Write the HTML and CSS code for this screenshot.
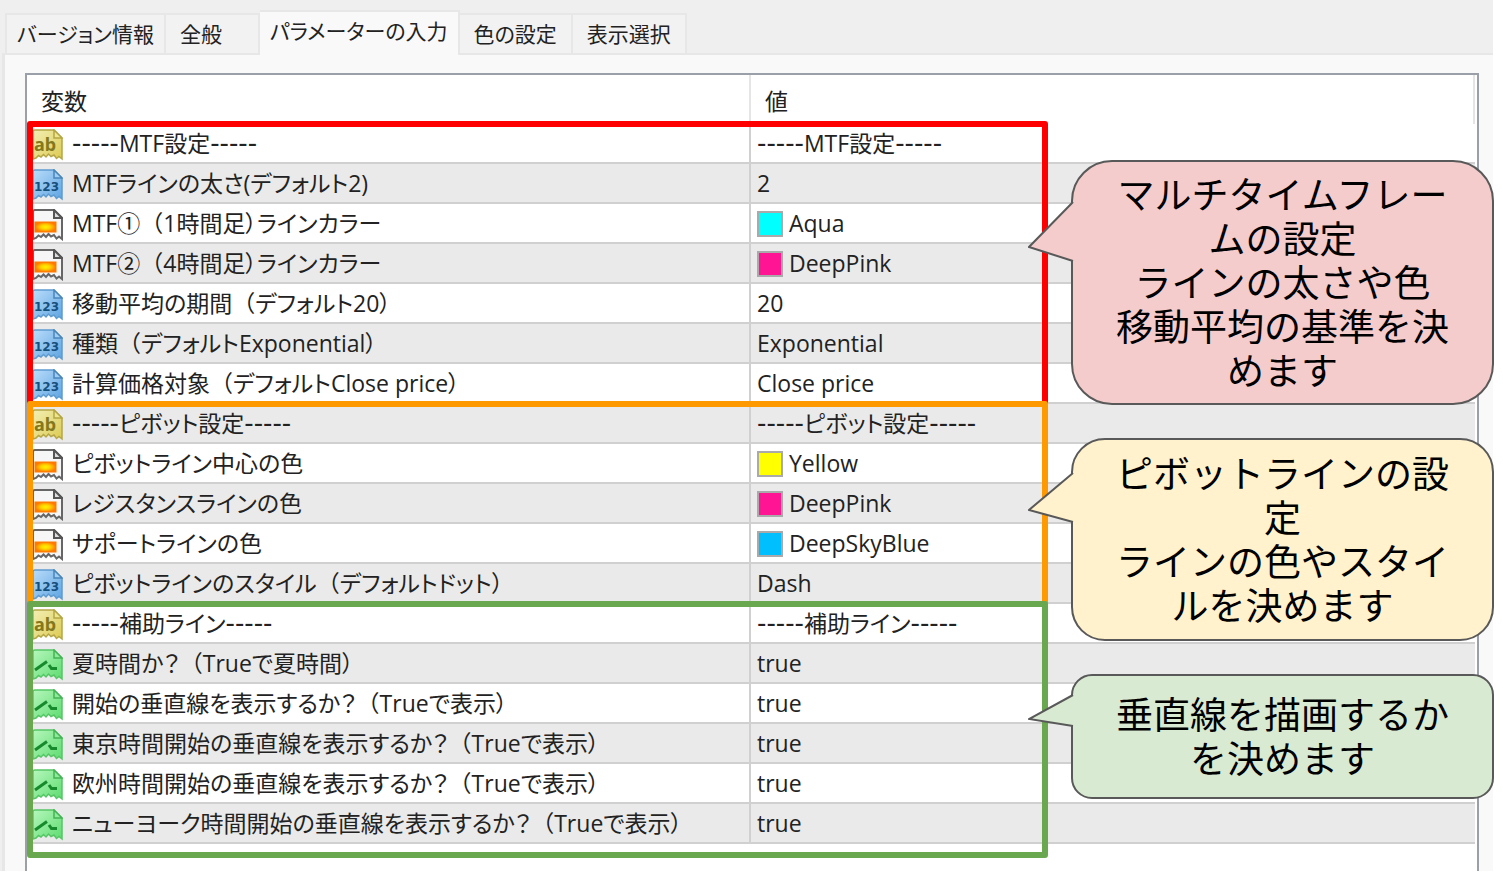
FILE: index.html
```html
<!DOCTYPE html>
<html lang="ja">
<head>
    <meta charset="UTF-8">
    <meta name="viewport" content="width=device-width, initial-scale=1.0">
    <title>パラメーターの入力</title>
    <link rel="stylesheet" href="styles.css">
</head>
<body>
    <!-- icon definitions -->
    <svg class="defs" width="0" height="0" aria-hidden="true">
        <defs>
            <linearGradient id="gYellow" x1="0" y1="0" x2="1" y2="1">
                <stop offset="0" stop-color="#f3efb4"/><stop offset="1" stop-color="#dccb52"/>
            </linearGradient>
            <linearGradient id="gBlue" x1="0" y1="0" x2="1" y2="1">
                <stop offset="0" stop-color="#b9dcfa"/><stop offset="1" stop-color="#5fa5e2"/>
            </linearGradient>
            <linearGradient id="gGreen" x1="0" y1="0" x2="1" y2="1">
                <stop offset="0" stop-color="#b5f7bc"/><stop offset="1" stop-color="#5fdc70"/>
            </linearGradient>
            <radialGradient id="gOrange">
                <stop offset="0" stop-color="#fff200"/><stop offset="0.45" stop-color="#ffd000"/><stop offset="1" stop-color="#ff7800"/>
            </radialGradient>
            <path id="page" d="M1 2.500Q1 1 3 1H22L30 9V30L27 27.500L24.500 29.500L22 26L19 27.500L16.500 25L14 28L11.500 25.500L9 28L6.500 26.500L4 29L1 30Z"/>
            <path id="fold" d="M22 1V9H30Z"/>
        </defs>
        <symbol id="icon-ab" viewBox="0 0 31 32">
            <use href="#page" fill="url(#gYellow)" stroke="#b5a645" stroke-width="1.500"/>
            <use href="#fold" fill="#eee68f" stroke="#b5a645" stroke-width="1.500"/>
        </symbol>
        <symbol id="icon-num" viewBox="0 0 31 32">
            <use href="#page" fill="url(#gBlue)" stroke="#5d9bd0" stroke-width="1.500"/>
            <use href="#fold" fill="#9dcdf5" stroke="#4b86b8" stroke-width="1.500"/>
        </symbol>
        <symbol id="icon-color" viewBox="0 0 31 32">
            <use href="#page" fill="#f6f6f6" stroke="#666" stroke-width="2"/>
            <use href="#fold" fill="#ddd" stroke="#555" stroke-width="2"/>
            <rect x="3" y="13" width="21" height="10" fill="url(#gOrange)" stroke="#ff7a00" stroke-width="1"/>
        </symbol>
        <symbol id="icon-bool" viewBox="0 0 31 32">
            <use href="#page" fill="url(#gGreen)" stroke="#55c665" stroke-width="1.500"/>
            <use href="#fold" fill="#8ceb98" stroke="#45b355" stroke-width="1.500"/>
            <path d="M3 21L15 12.500" fill="none" stroke="#168a2c" stroke-width="3"/>
            <path d="M17 16L19.500 19.500H25" fill="none" stroke="#168a2c" stroke-width="3"/>
        </symbol>
    </svg>

    <div class="dialog">
        <div class="tabs" role="tablist">
            <button class="tab first" role="tab">バージョン情報</button>
            <button class="tab general" role="tab">全般</button>
            <button class="tab active" role="tab" aria-selected="true">パラメーターの入力</button>
            <button class="tab" role="tab">色の設定</button>
            <button class="tab" role="tab">表示選択</button>
        </div>
        <div class="panel">
            <div class="list">
                <table>
                    <thead>
                        <tr><th>変数</th><th>値</th></tr>
                    </thead>
                    <tbody>
                        <tr><td><svg class="icon"><use href="#icon-ab"/><text x="2" y="22" class="glyph-ab">ab</text></svg><span class="dash">-----</span>MTF設定<span class="dash">-----</span></td><td><span class="dash">-----</span>MTF設定<span class="dash">-----</span></td></tr>
                        <tr><td><svg class="icon"><use href="#icon-num"/><text x="2" y="22" class="glyph-num">123</text></svg>MTFラインの太さ(デフォルト2)</td><td>2</td></tr>
                        <tr><td><svg class="icon"><use href="#icon-color"/></svg>MTF①<span class="paren">（</span>1時間足）ラインカラー</td><td><span class="swatch aqua"></span>Aqua</td></tr>
                        <tr><td><svg class="icon"><use href="#icon-color"/></svg>MTF②<span class="paren">（</span>4時間足）ラインカラー</td><td><span class="swatch deeppink"></span>DeepPink</td></tr>
                        <tr><td><svg class="icon"><use href="#icon-num"/><text x="2" y="22" class="glyph-num">123</text></svg>移動平均の期間<span class="paren">（</span>デフォルト20）</td><td>20</td></tr>
                        <tr><td><svg class="icon"><use href="#icon-num"/><text x="2" y="22" class="glyph-num">123</text></svg>種類<span class="paren">（</span>デフォルトExponential）</td><td>Exponential</td></tr>
                        <tr><td><svg class="icon"><use href="#icon-num"/><text x="2" y="22" class="glyph-num">123</text></svg>計算価格対象<span class="paren">（</span>デフォルトClose price）</td><td>Close price</td></tr>
                        <tr><td><svg class="icon"><use href="#icon-ab"/><text x="2" y="22" class="glyph-ab">ab</text></svg><span class="dash">-----</span>ピボット設定<span class="dash">-----</span></td><td><span class="dash">-----</span>ピボット設定<span class="dash">-----</span></td></tr>
                        <tr><td><svg class="icon"><use href="#icon-color"/></svg>ピボットライン中心の色</td><td><span class="swatch yellow"></span>Yellow</td></tr>
                        <tr><td><svg class="icon"><use href="#icon-color"/></svg>レジスタンスラインの色</td><td><span class="swatch deeppink"></span>DeepPink</td></tr>
                        <tr><td><svg class="icon"><use href="#icon-color"/></svg>サポートラインの色</td><td><span class="swatch skyblue"></span>DeepSkyBlue</td></tr>
                        <tr><td><svg class="icon"><use href="#icon-num"/><text x="2" y="22" class="glyph-num">123</text></svg>ピボットラインのスタイル<span class="paren">（</span>デフォルトドット）</td><td>Dash</td></tr>
                        <tr><td><svg class="icon"><use href="#icon-ab"/><text x="2" y="22" class="glyph-ab">ab</text></svg><span class="dash">-----</span>補助ライン<span class="dash">-----</span></td><td><span class="dash">-----</span>補助ライン<span class="dash">-----</span></td></tr>
                        <tr><td><svg class="icon"><use href="#icon-bool"/></svg>夏時間か？<span class="paren">（</span>Trueで夏時間）</td><td>true</td></tr>
                        <tr><td><svg class="icon"><use href="#icon-bool"/></svg>開始の垂直線を表示するか？<span class="paren">（</span>Trueで表示）</td><td>true</td></tr>
                        <tr><td><svg class="icon"><use href="#icon-bool"/></svg>東京時間開始の垂直線を表示するか？<span class="paren">（</span>Trueで表示）</td><td>true</td></tr>
                        <tr><td><svg class="icon"><use href="#icon-bool"/></svg>欧州時間開始の垂直線を表示するか？<span class="paren">（</span>Trueで表示）</td><td>true</td></tr>
                        <tr><td><svg class="icon"><use href="#icon-bool"/></svg>ニューヨーク時間開始の垂直線を表示するか？<span class="paren">（</span>Trueで表示）</td><td>true</td></tr>
                    </tbody>
                </table>

                <!-- group frames -->
                <div class="frame frame-mtf"></div>
                <div class="frame frame-pivot"></div>
                <div class="frame frame-sub"></div>

                <!-- callouts -->
                <div class="callout callout-mtf">
                    <svg class="tail" width="47" height="64" viewBox="0 0 47 64"><path d="M45 2L1 47L45 61"/></svg>
                    <p>マルチタイムフレームの設定<br>ラインの太さや色<br>移動平均の基準を決めます</p>
                </div>
                <div class="callout callout-pivot">
                    <svg class="tail" width="47" height="54" viewBox="0 0 47 54"><path d="M45 2L1 39L45 51"/></svg>
                    <p>ピボットラインの設定<br>ラインの色やスタイルを決めます</p>
                </div>
                <div class="callout callout-sub">
                    <svg class="tail" width="47" height="36" viewBox="0 0 47 36"><path d="M45 2L1 26L45 33"/></svg>
                    <p>垂直線を描画するかを決めます</p>
                </div>
            </div>
        </div>
    </div>
</body>
</html>
```
FILE: styles.css
```css
* {
    box-sizing: border-box;
}
body {
    margin: 0;
    padding: 0 10px 8px 0;
    background: #fff;
    color: #222;
    font-family: "Open Sans", "Noto Sans CJK JP", sans-serif;
    font-size: 23px;
}
.defs {
    position: absolute;
}
.dialog {
    display: flex;
    flex-direction: column;
    min-height: calc(100vh - 8px);
    padding: 10px 0 0 2px;
    background: #efefef;
}
.tabs {
    display: flex;
    align-items: flex-end;
    height: 43px;
    padding-left: 3px;
}
.tab {
    height: 40px;
    padding: 0 14px 2px;
    border: 2px solid #e7e7e7;
    border-left-width: 0;
    border-bottom: 0;
    background: #f2f2f2;
    color: #222;
    font-family: inherit;
    font-size: 21px;
    font-feature-settings: "palt";
    white-space: nowrap;
}
.tab.first {
    padding: 0 10px 2px;
    border-left-width: 2px;
}
.tab.general {
    padding-right: 36px;
}
.tab.active {
    position: relative;
    z-index: 1;
    height: 45px;
    margin-bottom: -2px;
    padding: 0 10px 8px;
    background: #f9f9f9;
}
.panel {
    display: flex;
    flex: 1;
    padding: 18px 14px 0 20px;
    border-top: 2px solid #e7e7e7;
    border-left: 3px solid #e7e7e7;
    background: #f9f9f9;
}
.list {
    position: relative;
    flex: 1;
    border: 2px solid #9a9fa8;
    border-bottom: 0;
    background: #fff;
}
table {
    width: calc(100% - 2px);
    border-collapse: separate;
    border-spacing: 0;
    table-layout: fixed;
    font-feature-settings: "palt";
}
th,
td {
    padding: 0 6px;
    border-right: 2px solid #e5e5e5;
    text-align: left;
    font-weight: normal;
    white-space: nowrap;
}
th {
    height: 49px;
    padding: 0 14px;
}
th:first-child {
    width: 50%;
}
td {
    height: 40px;
    border-bottom: 2px solid #d0d0d0;
    line-height: 38px;
    vertical-align: top;
}
td:first-child {
    padding-left: 5px;
    border-right-color: #d0d0d0;
}
td:last-child {
    border-right: 0;
}
tbody tr:nth-child(even) {
    background: #eaeaea;
}
.icon {
    width: 31px;
    height: 32px;
    margin: 5px 9px 0 0;
    vertical-align: top;
}
.glyph-ab {
    font: bold 18px "Noto Sans", sans-serif;
    fill: #85781c;
}
.glyph-num {
    font: bold 12px "DejaVu Sans", sans-serif;
    fill: #15507f;
}
.dash {
    font-family: "DejaVu Sans", sans-serif;
    font-size: 26px;
    line-height: 1;
}
.paren {
    font-feature-settings: normal;
}
.swatch {
    display: inline-block;
    width: 26px;
    height: 26px;
    margin: 7px 6px 0 0;
    border: 2px solid #aaa;
    vertical-align: top;
}
.aqua {
    background: #00ffff;
}
.deeppink {
    background: #ff1493;
}
.yellow {
    background: #ffff00;
}
.skyblue {
    background: #00bfff;
}

/* frames around each group of rows */
.frame {
    position: absolute;
    left: 0;
    right: 429px;
    border: 6px solid;
    border-radius: 3px;
}
.frame-mtf {
    top: 46px;
    height: 286px;
    border-color: #ff0000;
}
.frame-pivot {
    top: 326px;
    height: 206px;
    border-color: #ff9900;
}
.frame-sub {
    top: 526px;
    height: 257px;
    border-color: #6aa84f;
}

/* speech balloons */
.callout {
    position: absolute;
    right: -17px;
    display: flex;
    align-items: center;
    justify-content: center;
    width: 423px;
    padding: 0 40px 4px;
    border: 2px solid #595959;
    color: #000;
    font-family: "Noto Sans CJK JP", sans-serif;
    font-size: 37px;
    line-height: 44px;
    text-align: center;
}
.callout p {
    margin: 0;
}
.callout-mtf {
    top: 85px;
    height: 245px;
    border-radius: 41px;
    background: #f4cccc;
}
.callout-pivot {
    top: 363px;
    height: 203px;
    border-radius: 34px;
    background: #fff2cc;
}
.callout-sub {
    top: 599px;
    height: 125px;
    border-radius: 21px;
    background: #d9ead3;
}
.tail {
    position: absolute;
    left: -45px;
    stroke: #595959;
    stroke-width: 2;
}
.callout-mtf .tail {
    top: 38px;
    fill: #f4cccc;
}
.callout-pivot .tail {
    top: 31px;
    fill: #fff2cc;
}
.callout-sub .tail {
    top: 17px;
    fill: #d9ead3;
}
```
